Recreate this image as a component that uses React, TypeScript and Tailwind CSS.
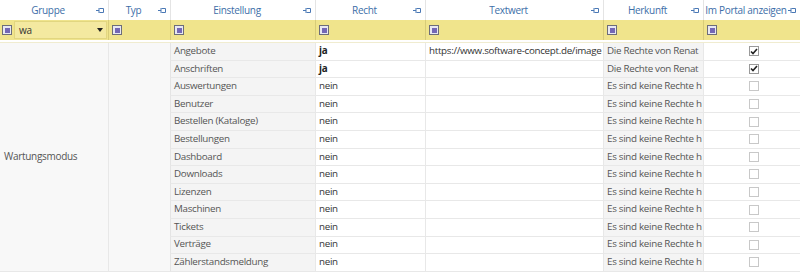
import React from 'react'

const cols = '108px 62px 145px 110px 178px 100px 97px'

const rows = [
  { name: 'Angebote', recht: 'ja', text: 'https://www.software-concept.de/image', herkunft: 'Die Rechte von Renat', portal: true },
  { name: 'Anschriften', recht: 'ja', text: '', herkunft: 'Die Rechte von Renat', portal: true },
  { name: 'Auswertungen', recht: 'nein', text: '', herkunft: 'Es sind keine Rechte h', portal: false },
  { name: 'Benutzer', recht: 'nein', text: '', herkunft: 'Es sind keine Rechte h', portal: false },
  { name: 'Bestellen (Kataloge)', recht: 'nein', text: '', herkunft: 'Es sind keine Rechte h', portal: false },
  { name: 'Bestellungen', recht: 'nein', text: '', herkunft: 'Es sind keine Rechte h', portal: false },
  { name: 'Dashboard', recht: 'nein', text: '', herkunft: 'Es sind keine Rechte h', portal: false },
  { name: 'Downloads', recht: 'nein', text: '', herkunft: 'Es sind keine Rechte h', portal: false },
  { name: 'Lizenzen', recht: 'nein', text: '', herkunft: 'Es sind keine Rechte h', portal: false },
  { name: 'Maschinen', recht: 'nein', text: '', herkunft: 'Es sind keine Rechte h', portal: false },
  { name: 'Tickets', recht: 'nein', text: '', herkunft: 'Es sind keine Rechte h', portal: false },
  { name: 'Verträge', recht: 'nein', text: '', herkunft: 'Es sind keine Rechte h', portal: false },
  { name: 'Zählerstandsmeldung', recht: 'nein', text: '', herkunft: 'Es sind keine Rechte h', portal: false },
]

function Pin() {
  return (
    <svg width="9" height="7" viewBox="0 0 9 7" className="shrink-0">
      <path d="M0 3.5H3M3 1V6M3.5 1.5H7.5V5.5H3.5" fill="none" stroke="#4a78b5" strokeWidth="1" />
    </svg>
  )
}

function FilterIcon() {
  return (
    <span className="w-[10px] h-[10px] border border-[#6d6d7a] bg-[#e8e8f0] flex items-center justify-center shrink-0">
      <span className="w-[5px] h-[5px] bg-[#7467b5]" />
    </span>
  )
}

function Header({ label, first }: { label: string; first?: boolean }) {
  return (
    <div className={`h-5 flex items-center pr-[3px] whitespace-nowrap ${first ? '' : 'border-l border-[#e4e4e4]'}`}>
      <span className="flex-1 text-center text-[#3d6ea8]">{label}</span>
      <Pin />
    </div>
  )
}

function Check({ on }: { on: boolean }) {
  return (
    <span className={`w-[10px] h-[10px] border flex items-center justify-center ${on ? 'border-[#9a9a9a] bg-white' : 'border-[#c8c8c8] bg-white'}`}>
      {on && (
        <svg width="8" height="7" viewBox="0 0 8 7">
          <path d="M1 3.5L3 5.5L7 1" fill="none" stroke="#222" strokeWidth="1.6" />
        </svg>
      )}
    </span>
  )
}

export default function App() {
  const cell = 'h-[17.6px] flex items-center pl-[3px] border-b border-[#e8e8e8] whitespace-nowrap overflow-hidden text-[9.8px]'
  return (
    <div className="w-[800px] h-[272px] bg-white overflow-hidden text-[10px] tracking-[-0.3px] text-[#555]" style={{ fontFamily: '"Open Sans", "Noto Sans", sans-serif' }}>
      <div className="grid" style={{ gridTemplateColumns: cols }}>
        <Header label="Gruppe" first />
        <Header label="Typ" />
        <Header label="Einstellung" />
        <Header label="Recht" />
        <Header label="Textwert" />
        <Header label="Herkunft" />
        <Header label="Im Portal anzeigen" />
      </div>

      <div className="grid h-5 bg-[#f0e48c]" style={{ gridTemplateColumns: cols }}>
        <div className="flex items-center pl-[2px] gap-[2px]">
          <FilterIcon />
          <div className="flex-1 h-[18px] bg-[#f4e9a0] border border-[#e2d680] flex items-center pl-1 pr-[3px] mr-[1px]">
            <span className="flex-1 text-[#333]">wa</span>
            <svg width="6" height="4" viewBox="0 0 6 4">
              <path d="M0 0H6L3 4Z" fill="#222" />
            </svg>
          </div>
        </div>
        {[0, 1, 2, 3, 4, 5].map((i) => (
          <div key={i} className="flex items-center pl-[3px] border-l border-[#d8cc78]">
            <FilterIcon />
          </div>
        ))}
      </div>

      <div className="h-[3px] border-b border-[#f0ecd0]" />

      <div className="grid" style={{ gridTemplateColumns: cols }}>
        <div className="bg-[#f8f8f8] flex items-center px-1 border-b border-[#e8e8e8]" style={{ gridRow: 'span 13' }}>
          Wartungsmodus
        </div>
        <div className="bg-[#f8f8f8] border-l border-[#e4e4e4] border-b border-[#e8e8e8]" style={{ gridRow: 'span 13' }} />
        {rows.map((r) => (
          <React.Fragment key={r.name}>
            <div className={`${cell} bg-[#f4f4f4] border-l border-l-[#e4e4e4]`}>{r.name}</div>
            <div className={`${cell} border-l border-l-[#e8e8e8] ${r.recht === 'ja' ? 'font-bold text-[#222]' : 'text-[#333]'}`}>{r.recht}</div>
            <div className={`${cell} border-l border-l-[#e8e8e8] text-[#333]`}>{r.text}</div>
            <div className={`${cell} bg-[#f4f4f4] border-l border-l-[#e8e8e8]`}>{r.herkunft}</div>
            <div className={`${cell} justify-center border-l border-l-[#e8e8e8]`}>
              <Check on={r.portal} />
            </div>
          </React.Fragment>
        ))}
      </div>
    </div>
  )
}
